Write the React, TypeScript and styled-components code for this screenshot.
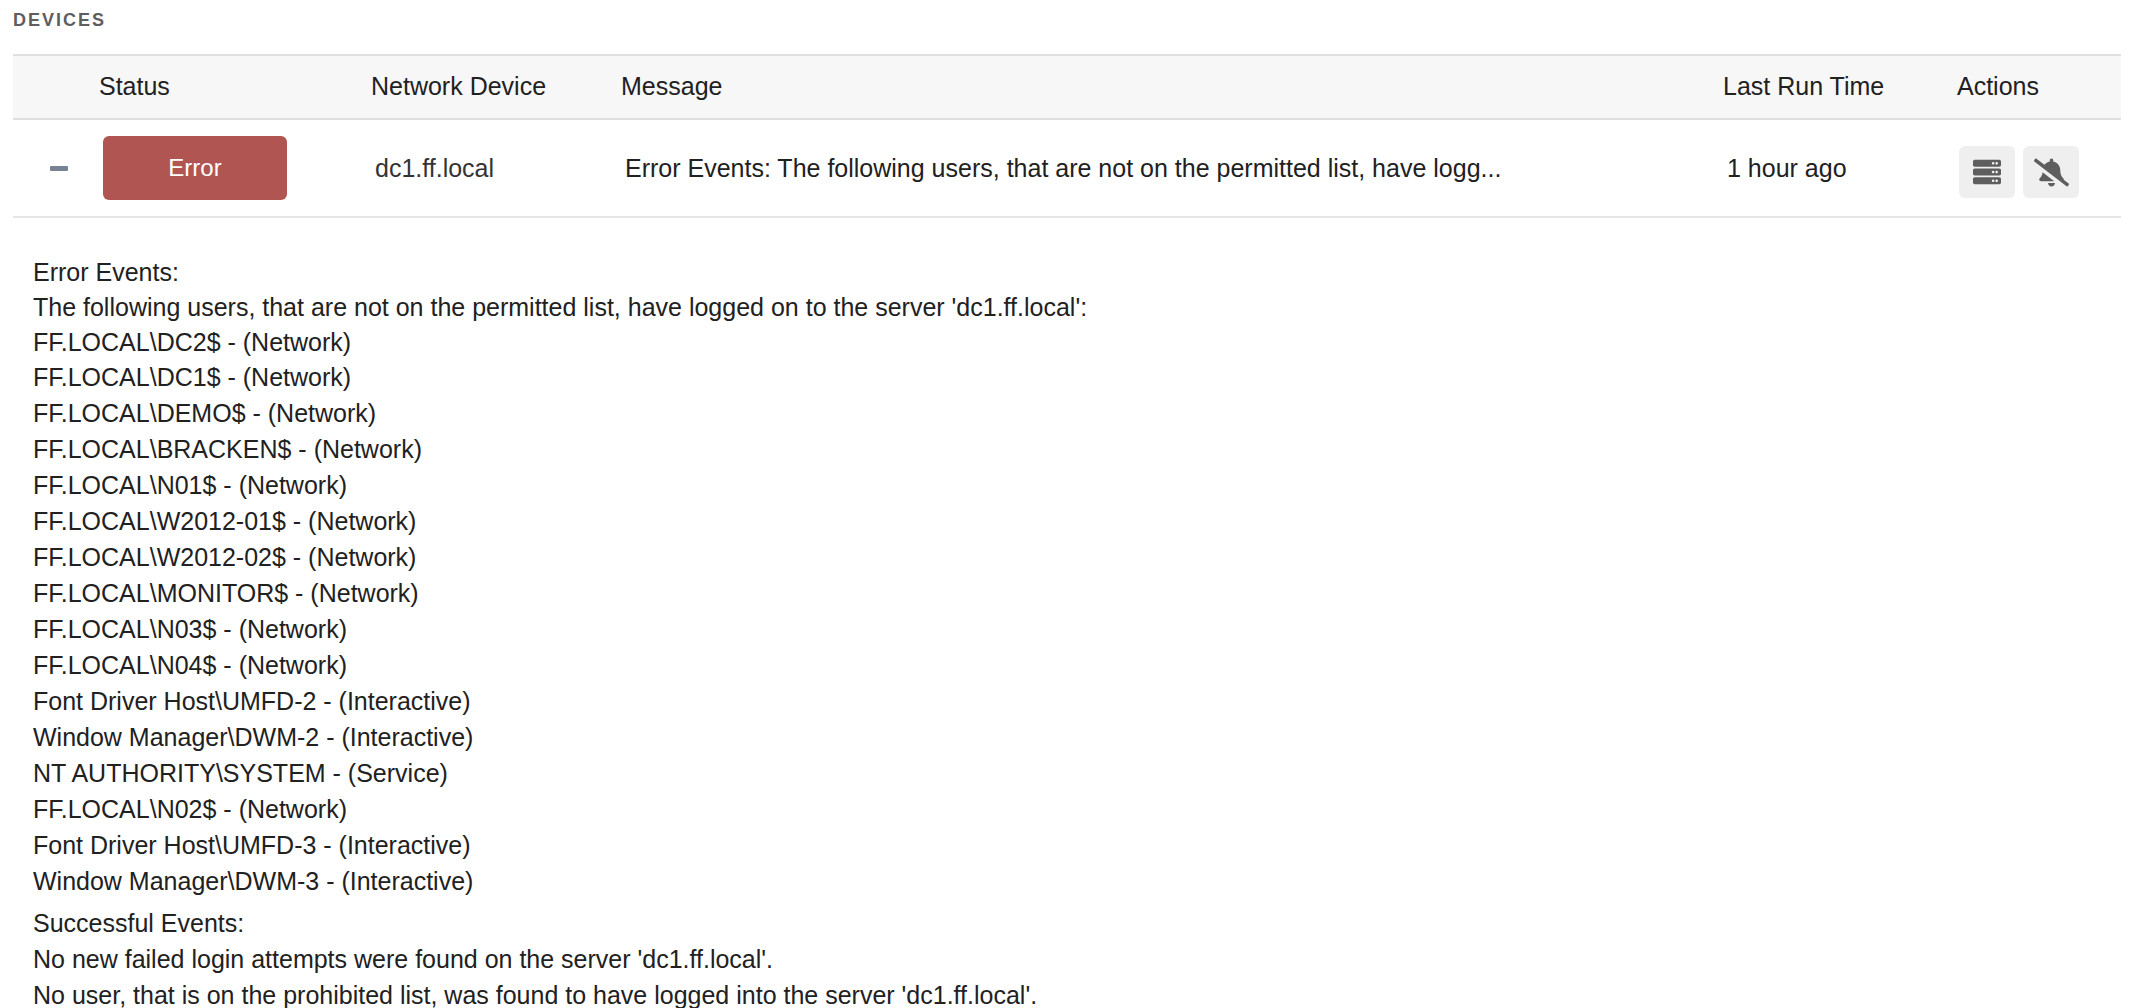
import React, { useState } from "react";
import styled, { createGlobalStyle } from "styled-components";
import { FaBellSlash, FaServer } from "react-icons/fa";

const GlobalStyle = createGlobalStyle`
  *, *::before, *::after { box-sizing: border-box; }
  body {
    margin: 0;
    background: #ffffff;
    color: #212121;
    font-family: "Liberation Sans", Arial, Helvetica, sans-serif;
    font-size: 25px;
    line-height: 36px;
  }
`;

const Page = styled.main`
  padding: 8px 12px 0 13px;
`;

const SectionTitle = styled.h2`
  margin: 0 0 22px;
  color: #5e5e5e;
  font-size: 18px;
  line-height: 24px;
  font-weight: 700;
  letter-spacing: 2px;
  text-transform: uppercase;
`;

const Table = styled.table`
  width: 100%;
  table-layout: fixed;
  border-collapse: separate;
  border-spacing: 0;
`;

const Column = styled.col<{ $width?: number }>`
  width: ${(p) => (p.$width ? `${p.$width}px` : "auto")};
`;

const HeadCell = styled.th`
  height: 66px;
  padding: 0 0 2px;
  background: #f7f7f7;
  border: solid #dfdfdf;
  border-width: 2px 0;
  font-weight: 400;
  text-align: left;
`;

const Cell = styled.td`
  height: 98px;
  padding: 0 0 0 4px;
  border-bottom: 2px solid #e6e6e6;
  vertical-align: middle;
  white-space: nowrap;
`;

const ActionsCell = styled(Cell)`
  padding: 8px 0 0 2px;
`;

const Toggle = styled.button`
  display: flex;
  align-items: center;
  justify-content: center;
  width: 32px;
  height: 32px;
  margin-left: 26px;
  padding: 0;
  border: 0;
  background: none;
  color: #778392;
  cursor: pointer;
`;

const StatusBadge = styled.span`
  display: flex;
  align-items: center;
  justify-content: center;
  width: 184px;
  height: 64px;
  border-radius: 6px;
  background: #b05552;
  color: #ffffff;
  font-size: 24px;
`;

const DeviceName = styled.span`
  color: #333333;
`;

const Actions = styled.div`
  display: flex;
  gap: 8px;
`;

const ActionButton = styled.button`
  display: flex;
  align-items: center;
  justify-content: center;
  width: 56px;
  height: 52px;
  padding: 0;
  border: 0;
  border-radius: 6px;
  background: #efefef;
  color: #5e5e5e;
  cursor: pointer;
`;

const Details = styled.section`
  padding: 37px 20px 0;
`;

const Lines = styled.div<{ $compact?: boolean; $spaced?: boolean }>`
  margin-top: ${(p) => (p.$spaced ? 6 : 0)}px;
  line-height: ${(p) => (p.$compact ? 35 : 36)}px;
`;

const Line = styled.p`
  margin: 0;
`;

const summary = [
  "Error Events:",
  "The following users, that are not on the permitted list, have logged on to the server 'dc1.ff.local':",
  "FF.LOCAL\\DC2$ - (Network)",
  "FF.LOCAL\\DC1$ - (Network)",
];

const logons = [
  "FF.LOCAL\\DEMO$ - (Network)",
  "FF.LOCAL\\BRACKEN$ - (Network)",
  "FF.LOCAL\\N01$ - (Network)",
  "FF.LOCAL\\W2012-01$ - (Network)",
  "FF.LOCAL\\W2012-02$ - (Network)",
  "FF.LOCAL\\MONITOR$ - (Network)",
  "FF.LOCAL\\N03$ - (Network)",
  "FF.LOCAL\\N04$ - (Network)",
  "Font Driver Host\\UMFD-2 - (Interactive)",
  "Window Manager\\DWM-2 - (Interactive)",
  "NT AUTHORITY\\SYSTEM - (Service)",
  "FF.LOCAL\\N02$ - (Network)",
  "Font Driver Host\\UMFD-3 - (Interactive)",
  "Window Manager\\DWM-3 - (Interactive)",
];

const successes = [
  "Successful Events:",
  "No new failed login attempts were found on the server 'dc1.ff.local'.",
  "No user, that is on the prohibited list, was found to have logged into the server 'dc1.ff.local'.",
];

const renderLines = (lines: string[]) => lines.map((text) => <Line key={text}>{text}</Line>);

export default function App() {
  const [open, setOpen] = useState(true);

  return (
    <>
      <GlobalStyle />
      <Page>
        <SectionTitle>Devices</SectionTitle>
        <Table>
          <colgroup>
            <Column $width={86} />
            <Column $width={272} />
            <Column $width={250} />
            <Column />
            <Column $width={234} />
            <Column $width={164} />
          </colgroup>
          <thead>
            <tr>
              <HeadCell aria-label="Expand" />
              <HeadCell scope="col">Status</HeadCell>
              <HeadCell scope="col">Network Device</HeadCell>
              <HeadCell scope="col">Message</HeadCell>
              <HeadCell scope="col">Last Run Time</HeadCell>
              <HeadCell scope="col">Actions</HeadCell>
            </tr>
          </thead>
          <tbody>
            <tr>
              <Cell>
                <Toggle aria-label="Toggle details" aria-expanded={open} onClick={() => setOpen(!open)}>
                  <svg width="18" height="18" viewBox="0 0 18 18" aria-hidden="true">
                    <rect x="0" y="7" width="18" height="5" rx="1" fill="currentColor" />
                    {!open && <rect x="7" y="0" width="5" height="18" rx="1" fill="currentColor" />}
                  </svg>
                </Toggle>
              </Cell>
              <Cell>
                <StatusBadge>Error</StatusBadge>
              </Cell>
              <Cell>
                <DeviceName>dc1.ff.local</DeviceName>
              </Cell>
              <Cell>Error Events: The following users, that are not on the permitted list, have logg...</Cell>
              <Cell>1 hour ago</Cell>
              <ActionsCell>
                <Actions>
                  <ActionButton aria-label="View device">
                    <FaServer size={28} />
                  </ActionButton>
                  <ActionButton aria-label="Mute alerts">
                    <FaBellSlash size={35} />
                  </ActionButton>
                </Actions>
              </ActionsCell>
            </tr>
          </tbody>
        </Table>
        {open && (
          <Details>
            <Lines $compact>{renderLines(summary)}</Lines>
            <Lines>{renderLines(logons)}</Lines>
            <Lines $spaced>{renderLines(successes)}</Lines>
          </Details>
        )}
      </Page>
    </>
  );
}
